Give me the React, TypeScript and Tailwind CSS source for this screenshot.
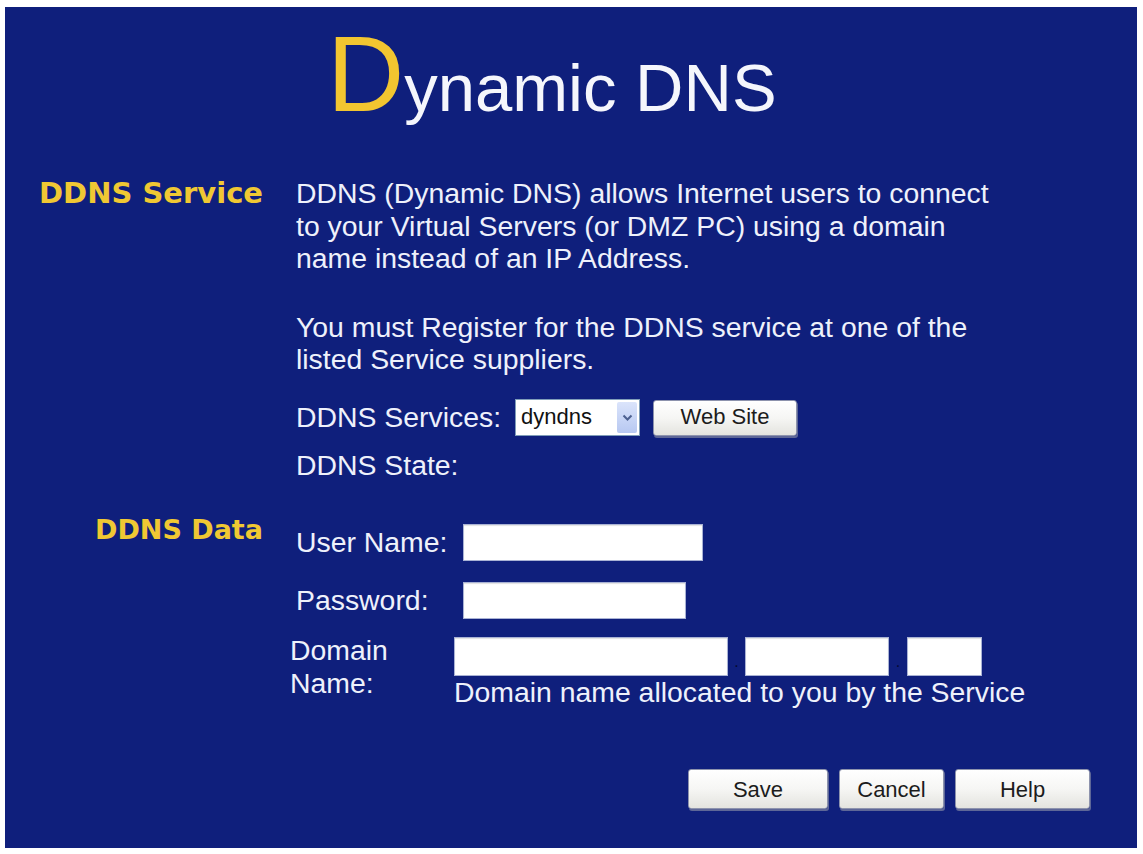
import React from 'react';

const bodyText = "font-['Liberation_Sans',Arial,sans-serif] text-[28.4px] leading-[32.5px] text-[#eef1fb]";
const sectionText = "font-['DejaVu_Sans',Verdana,sans-serif] font-bold leading-[32.5px] text-[#f0c833] text-right";

function SectionLabel({ children, className }: { children: React.ReactNode; className: string }) {
  return <div className={`${sectionText} ${className}`}>{children}</div>;
}

function TextBox({ className }: { className: string }) {
  return (
    <div
      className={`bg-white border border-[#a9b2d4] shadow-[inset_0_1px_1px_rgba(0,0,0,0.12)] ${className}`}
    />
  );
}

function XpButton({ label, className }: { label: string; className: string }) {
  return (
    <button
      type="button"
      className={`flex items-center justify-center rounded-[3px] border border-[#8d93ad] bg-gradient-to-b from-white via-[#f6f6f4] to-[#e4e4df] shadow-[1px_2px_0_#5e6797] font-['Liberation_Sans',Arial,sans-serif] text-[22px] text-[#1c1c1c] ${className}`}
    >
      {label}
    </button>
  );
}

function ServiceSelect() {
  return (
    <div className="flex h-[37px] w-[125px] items-stretch border border-[#7f9db9] bg-white">
      <div className="flex flex-1 items-center pl-[5px] font-['Liberation_Sans',Arial,sans-serif] text-[22px] text-[#111]">
        dyndns
      </div>
      <div className="m-[2px] flex w-[20px] items-center justify-center rounded-[2px] bg-gradient-to-b from-[#dbe4fb] to-[#b7c8f1]">
        <svg width="11" height="8" viewBox="0 0 11 8">
          <path d="M1.5 1.5 L5.5 5.5 L9.5 1.5" fill="none" stroke="#4d6190" strokeWidth="2" />
        </svg>
      </div>
    </div>
  );
}

function Dot({ className }: { className: string }) {
  return (
    <span className={`mb-[6px] text-center text-[16px] leading-[16px] text-[#050a30] ${className}`}>.</span>
  );
}

export default function App() {
  return (
    <div className="h-[854px] w-[1143px] bg-white pb-[6px] pl-[5px] pr-[6px] pt-[7px]">
      <div className="flex h-full flex-col bg-[#0f1f7c]">
        {/* title */}
        <div className="flex items-baseline pl-[322px] pt-[14px] font-['Liberation_Sans',Arial,sans-serif] leading-none">
          <span className="text-[107px] text-[#f2c530]">D</span>
          <span className="text-[67px] text-[#f5f6fc]">ynamic DNS</span>
        </div>

        <div className="mt-[49px] grid grid-cols-[258px_1fr] gap-x-[33px]">
          {/* DDNS Service */}
          <SectionLabel className="text-[29px]">DDNS Service</SectionLabel>
          <div className={bodyText}>
            <p>
              DDNS (Dynamic DNS) allows Internet users to connect
              <br />
              to your Virtual Servers (or DMZ PC) using a domain
              <br />
              name instead of an IP Address.
            </p>
            <p className="mt-[36px]">
              You must Register for the DDNS service at one of the
              <br />
              listed Service suppliers.
            </p>
            <div className="mt-[22px] flex h-[40px] items-center">
              <span className="w-[219px]">DDNS Services:</span>
              <ServiceSelect />
              <XpButton label="Web Site" className="ml-[13px] h-[36px] w-[144px]" />
            </div>
            <div className="mt-[11px]">DDNS State:</div>
          </div>

          {/* DDNS Data */}
          <div className="mt-[32.5px]">
            <SectionLabel className="text-[27px]">DDNS Data</SectionLabel>
          </div>
          <div className={`mt-[32.5px] ${bodyText}`}>
            <div className="mt-[10px] flex h-[38px] items-center">
              <span className="w-[167px]">User Name:</span>
              <TextBox className="h-[37px] w-[240px]" />
            </div>
            <div className="mt-[20px] flex h-[37px] items-center">
              <span className="w-[167px]">Password:</span>
              <TextBox className="h-[37px] w-[223px]" />
            </div>
            <div className="mt-[15px] flex">
              <div className="-ml-[6px] w-[164px] leading-[33px]">
                Domain
                <br />
                Name:
              </div>
              <div>
                <div className="mt-[3px] flex items-end">
                  <TextBox className="h-[39px] w-[274px]" />
                  <Dot className="w-[17px]" />
                  <TextBox className="h-[39px] w-[144px]" />
                  <Dot className="w-[18px]" />
                  <TextBox className="h-[39px] w-[75px]" />
                </div>
                <div>Domain name allocated to you by the Service</div>
              </div>
            </div>
          </div>
        </div>

        {/* action buttons */}
        <div className="mt-[61px] flex justify-end gap-[11px] pr-[47px]">
          <XpButton label="Save" className="h-[40px] w-[140px]" />
          <XpButton label="Cancel" className="h-[40px] w-[105px]" />
          <XpButton label="Help" className="h-[40px] w-[135px]" />
        </div>
      </div>
    </div>
  );
}
